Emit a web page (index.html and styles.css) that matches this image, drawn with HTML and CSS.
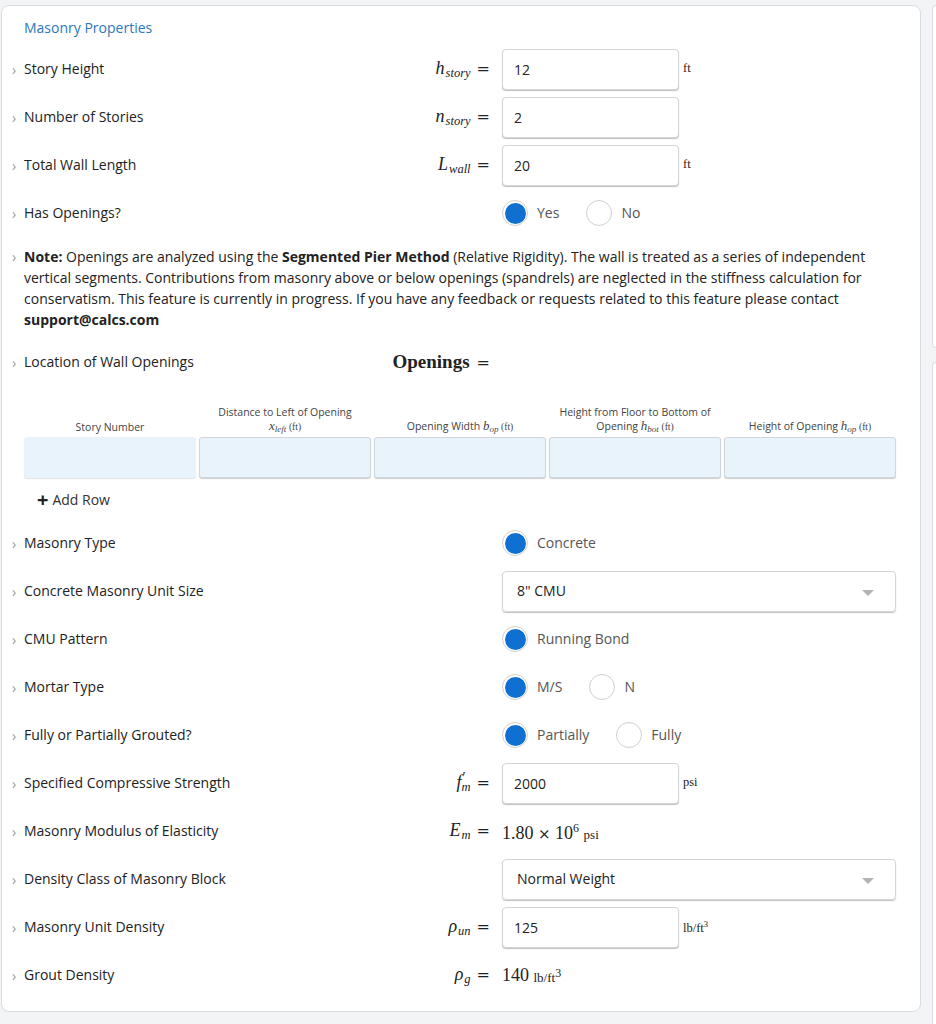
FILE: index.html
```html
<!DOCTYPE html>
<html>
<head>
<meta charset="utf-8">
<link rel="stylesheet" href="styles.css">
</head>
<body>
<div class="page">
  <section class="card main">
    <h2 class="title">Masonry Properties</h2>

    <div class="row">
      <span class="chev">›</span>
      <span class="label">Story Height</span>
      <span class="math"><span class="mi">h</span><span class="sub">story</span><span class="eq">=</span></span>
      <div class="ctrl"><div class="input">12</div><span class="unit">ft</span></div>
    </div>

    <div class="row">
      <span class="chev">›</span>
      <span class="label">Number of Stories</span>
      <span class="math"><span class="mi">n</span><span class="sub">story</span><span class="eq">=</span></span>
      <div class="ctrl"><div class="input">2</div></div>
    </div>

    <div class="row">
      <span class="chev">›</span>
      <span class="label">Total Wall Length</span>
      <span class="math"><span class="mi">L</span><span class="sub">wall</span><span class="eq">=</span></span>
      <div class="ctrl"><div class="input">20</div><span class="unit">ft</span></div>
    </div>

    <div class="row">
      <span class="chev">›</span>
      <span class="label">Has Openings?</span>
      <span class="math"></span>
      <div class="ctrl radios">
        <span class="radio on"><span class="dot"></span>Yes</span>
        <span class="radio"><span class="dot"></span>No</span>
      </div>
    </div>

    <div class="note">
      <span class="chev">›</span>
      <p><b>Note:</b> Openings are analyzed using the <b>Segmented Pier Method</b> (Relative Rigidity). The wall is treated as a series of independent vertical segments. Contributions from masonry above or below openings (spandrels) are neglected in the stiffness calculation for conservatism. This feature is currently in progress. If you have any feedback or requests related to this feature please contact <b>support@calcs.com</b></p>
    </div>

    <div class="row loc">
      <span class="chev">›</span>
      <span class="label">Location of Wall Openings</span>
      <span class="openings-title">Openings<span class="eq">=</span></span>
    </div>

    <div class="table">
      <div class="th">Story Number</div>
      <div class="th">Distance to Left of Opening<br><span class="tm">x</span><span class="tsub">left</span> <span class="tu">(ft)</span></div>
      <div class="th">Opening Width <span class="tm">b</span><span class="tsub">op</span> <span class="tu">(ft)</span></div>
      <div class="th">Height from Floor to Bottom of<br>Opening <span class="tm">h</span><span class="tsub">bot</span> <span class="tu">(ft)</span></div>
      <div class="th">Height of Opening <span class="tm">h</span><span class="tsub">op</span> <span class="tu">(ft)</span></div>
      <div class="td first"></div>
      <div class="td"></div>
      <div class="td"></div>
      <div class="td"></div>
      <div class="td"></div>
    </div>

    <div class="addrow"><span class="plus">+</span>Add Row</div>

    <div class="row">
      <span class="chev">›</span>
      <span class="label">Masonry Type</span>
      <span class="math"></span>
      <div class="ctrl radios">
        <span class="radio on"><span class="dot"></span>Concrete</span>
      </div>
    </div>

    <div class="row">
      <span class="chev">›</span>
      <span class="label">Concrete Masonry Unit Size</span>
      <span class="math"></span>
      <div class="ctrl"><div class="select">8" CMU<span class="caret"></span></div></div>
    </div>

    <div class="row">
      <span class="chev">›</span>
      <span class="label">CMU Pattern</span>
      <span class="math"></span>
      <div class="ctrl radios">
        <span class="radio on"><span class="dot"></span>Running Bond</span>
      </div>
    </div>

    <div class="row">
      <span class="chev">›</span>
      <span class="label">Mortar Type</span>
      <span class="math"></span>
      <div class="ctrl radios">
        <span class="radio on"><span class="dot"></span>M/S</span>
        <span class="radio"><span class="dot"></span>N</span>
      </div>
    </div>

    <div class="row">
      <span class="chev">›</span>
      <span class="label">Fully or Partially Grouted?</span>
      <span class="math"></span>
      <div class="ctrl radios">
        <span class="radio on"><span class="dot"></span>Partially</span>
        <span class="radio"><span class="dot"></span>Fully</span>
      </div>
    </div>

    <div class="row">
      <span class="chev">›</span>
      <span class="label">Specified Compressive Strength</span>
      <span class="math"><span class="mi">f</span><span class="prime">′</span><span class="sub msub">m</span><span class="eq">=</span></span>
      <div class="ctrl"><div class="input">2000</div><span class="unit">psi</span></div>
    </div>

    <div class="row">
      <span class="chev">›</span>
      <span class="label">Masonry Modulus of Elasticity</span>
      <span class="math"><span class="mi">E</span><span class="sub">m</span><span class="eq">=</span></span>
      <div class="ctrl"><span class="val">1.80 <span class="times">×</span> 10<sup>6</sup> <span class="vu">psi</span></span></div>
    </div>

    <div class="row">
      <span class="chev">›</span>
      <span class="label">Density Class of Masonry Block</span>
      <span class="math"></span>
      <div class="ctrl"><div class="select">Normal Weight<span class="caret"></span></div></div>
    </div>

    <div class="row">
      <span class="chev">›</span>
      <span class="label">Masonry Unit Density</span>
      <span class="math"><span class="mi">ρ</span><span class="sub">un</span><span class="eq">=</span></span>
      <div class="ctrl"><div class="input">125</div><span class="unit">lb/ft<sup>3</sup></span></div>
    </div>

    <div class="row">
      <span class="chev">›</span>
      <span class="label">Grout Density</span>
      <span class="math"><span class="mi">ρ</span><span class="sub">g</span><span class="eq">=</span></span>
      <div class="ctrl"><span class="val">140 <span class="vu">lb/ft<sup>3</sup></span></span></div>
    </div>
  </section>

  <div class="side">
    <section class="card side-a"></section>
    <section class="card side-b"></section>
  </div>
</div>
</body>
</html>
```

FILE: styles.css
```css
html, body {
  margin: 0;
  padding: 0;
}
body {
  background: #f3f4f6;
  font-family: "Open Sans", "Liberation Sans", sans-serif;
  font-size: 14px;
  color: #222;
  overflow: hidden;
}
.page {
  display: flex;
  gap: 11px;
  width: 936px;
  padding: 5px 0 0 1px;
  box-sizing: border-box;
}
.card {
  background: #fff;
  border: 1px solid #d9dde1;
  border-radius: 8px;
  box-sizing: border-box;
}
.main {
  flex: 0 0 920px;
  height: 1007px;
}
.side {
  flex: 1 1 auto;
  min-width: 0;
  display: flex;
  flex-direction: column;
  gap: 14px;
}
.side .card {
  border-right: none;
  border-radius: 8px 0 0 8px;
}
.side-a { height: 343px; }
.side-b { height: 700px; }

.title {
  margin: 0;
  padding: 12px 0 7px 22px;
  font-size: 14px;
  line-height: 20px;
  font-weight: 400;
  color: #2b78bb;
}

.row {
  display: grid;
  grid-template-columns: 22px 1fr auto 394px;
  align-items: center;
  height: 48px;
  padding-right: 24px;
}
.chev {
  color: #9a9a9a;
  font-size: 14px;
  text-align: center;
  padding-left: 2px;
}
.label {
  line-height: 20px;
}
.math {
  font-family: "Liberation Serif", "DejaVu Serif", serif;
  font-size: 18px;
  line-height: 22px;
  margin-right: 12px;
  display: inline-flex;
  align-items: baseline;
  white-space: nowrap;
}
.mi {
  font-style: italic;
}
.sub {
  font-style: italic;
  font-size: 12.5px;
  position: relative;
  top: 3px;
  margin-left: 1px;
}
.prime {
  font-size: 14px;
  position: relative;
  top: -6px;
  margin-left: 1px;
}
.sub.msub {
  margin-left: -4px;
}
.eq {
  font-family: "DejaVu Serif", "Liberation Serif", serif;
  font-style: normal;
  margin-left: 6px;
  font-size: 16px;
}

.ctrl {
  display: flex;
  align-items: flex-start;
}
.input {
  width: 177px;
  height: 41px;
  box-sizing: border-box;
  border: 1px solid #d3d6da;
  border-radius: 4px;
  box-shadow: 0 1px 1px rgba(0, 0, 0, 0.25);
  padding: 10px 11px;
  line-height: 20px;
  color: #222;
  background: #fff;
}
.unit {
  font-family: "Liberation Serif", "DejaVu Serif", serif;
  font-size: 12.5px;
  margin: 12px 0 0 4px;
}
.unit sup, .vu sup {
  font-size: 8.5px;
}
.select {
  width: 394px;
  height: 41px;
  box-sizing: border-box;
  border: 1px solid #d3d6da;
  border-radius: 4px;
  box-shadow: 0 1px 1px rgba(0, 0, 0, 0.25);
  padding: 10px 14px;
  line-height: 20px;
  display: flex;
  justify-content: space-between;
  align-items: center;
}
.caret {
  width: 0;
  height: 0;
  border-left: 6px solid transparent;
  border-right: 6px solid transparent;
  border-top: 6px solid #b3b3b3;
  margin-right: 7px;
  margin-top: 3px;
}

.radios {
  align-items: center;
}
.radio {
  display: inline-flex;
  align-items: center;
  gap: 9px;
  margin-right: 27px;
  color: #555;
  line-height: 20px;
}
.dot {
  width: 26px;
  height: 26px;
  box-sizing: border-box;
  border: 1px solid #d0d0d0;
  border-radius: 50%;
  display: inline-flex;
  align-items: center;
  justify-content: center;
  background: #fff;
}
.radio.on .dot::after {
  content: "";
  width: 21px;
  height: 21px;
  border-radius: 50%;
  background: #0f70d2;
}

.val {
  font-family: "Liberation Serif", "DejaVu Serif", serif;
  font-size: 18px;
  line-height: 22px;
  white-space: nowrap;
}
.times {
  font-family: "DejaVu Serif", serif;
  font-size: 15px;
}
.val sup {
  font-size: 12px;
}
.vu {
  font-size: 13px;
}

.note {
  display: grid;
  grid-template-columns: 22px 1fr;
  padding: 9px 24px 8px 0;
}
.note .chev {
  line-height: 21px;
}
.note p {
  margin: 0;
  line-height: 21px;
}

.loc {
  grid-template-columns: 22px 1fr auto;
}
.openings-title {
  font-family: "Liberation Serif", "DejaVu Serif", serif;
  font-weight: 700;
  font-size: 19px;
  margin-right: 406px;
  white-space: nowrap;
}
.openings-title .eq {
  font-weight: 400;
  margin-left: 7px;
}

.table {
  display: grid;
  grid-template-columns: repeat(5, 1fr);
  column-gap: 3px;
  row-gap: 3px;
  padding: 19px 24px 0 22px;
}
.th {
  align-self: end;
  text-align: center;
  font-size: 10.5px;
  line-height: 14px;
  color: #444;
}
.tm {
  font-family: "Liberation Serif", "DejaVu Serif", serif;
  font-style: italic;
  font-size: 13px;
}
.tsub {
  font-family: "Liberation Serif", "DejaVu Serif", serif;
  font-style: italic;
  font-size: 9px;
  position: relative;
  top: 2px;
}
.tu {
  font-family: "Liberation Serif", "DejaVu Serif", serif;
  font-size: 9.5px;
}
.td {
  height: 41px;
  box-sizing: border-box;
  background: #e9f3fc;
  border: 1px solid #d0d6dc;
  border-radius: 3px;
  box-shadow: 0 1px 1px rgba(0, 0, 0, 0.2);
}
.td.first {
  border-color: #e9f3fc;
  box-shadow: 0 1px 1px rgba(0, 0, 0, 0.12);
}

.addrow {
  display: flex;
  align-items: center;
  padding: 11px 0 8px 35px;
  line-height: 22px;
  color: #333;
}
.plus {
  font-size: 20px;
  font-weight: 700;
  margin-right: 4px;
  color: #222;
}
```
